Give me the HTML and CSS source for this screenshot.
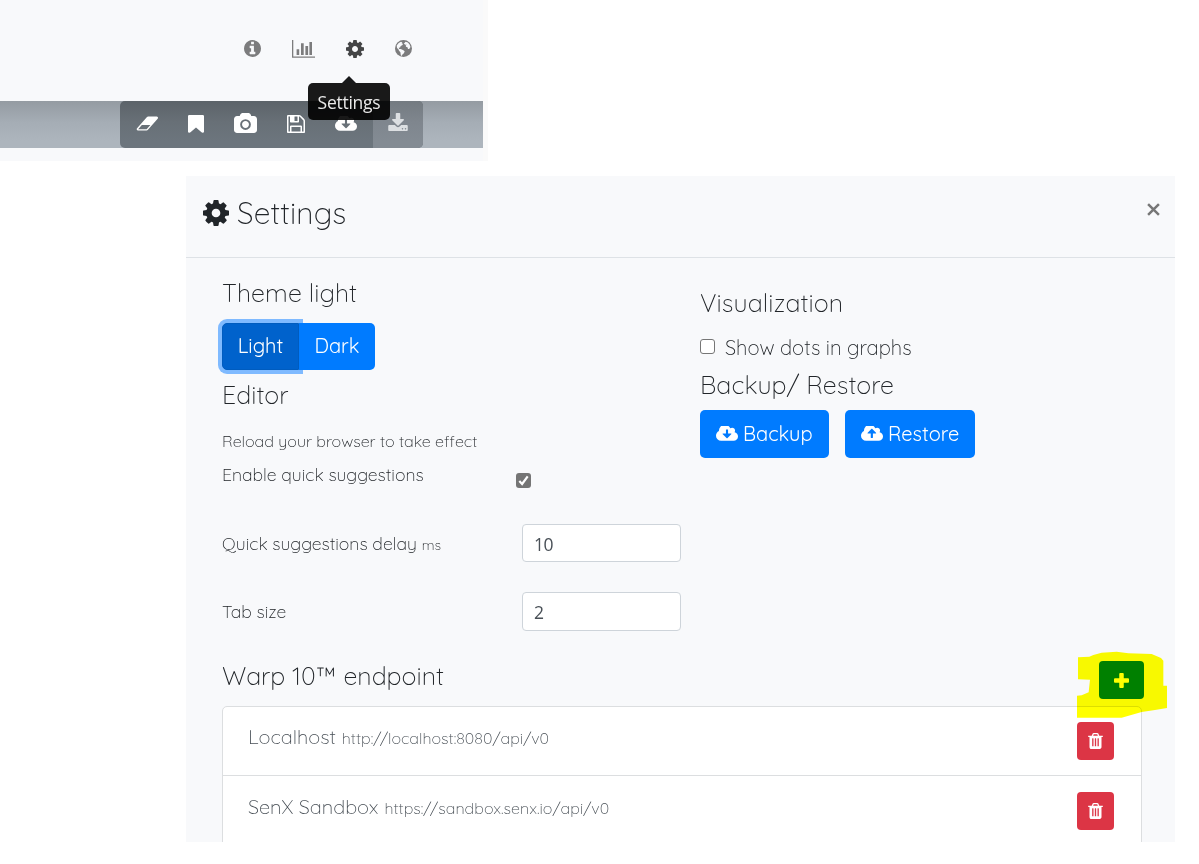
FILE: index.html
```html
<!DOCTYPE html>
<html lang="en">
<head>
<meta charset="utf-8">
<title>Settings</title>
<link rel="stylesheet" href="styles.css">
</head>
<body>
<svg class="sprite" aria-hidden="true">
  <symbol id="i-cog" viewBox="128 128 1536 1536"><path d="M1152 896q0-106-75-181t-181-75-181 75-75 181 75 181 181 75 181-75 75-181zm512-109v222q0 12-8 23t-20 13l-185 28q-19 54-39 91 35 50 107 138 10 12 10 25t-9 23q-27 37-99 108t-94 71q-12 0-26-9l-138-108q-44 23-91 38-16 136-29 186-7 28-36 28h-222q-14 0-24.500-8.500t-11.500-21.500l-28-184q-49-16-90-37l-141 107q-10 9-25 9-14 0-25-11-126-114-165-168-7-10-7-23 0-12 8-23 15-21 51-66.500t54-70.500q-27-50-41-99l-183-27q-13-2-21-12.500t-8-23.500v-222q0-12 8-23t19-13l186-28q14-46 39-92-40-57-107-138-10-12-10-24 0-10 9-23 26-36 98.500-107.500t94.500-71.500q13 0 26 10l138 107q44-23 91-38 16-136 29-186 7-28 36-28h222q14 0 24.500 8.500t11.500 21.500l28 184q49 16 90 37l142-107q9-9 24-9 13 0 25 10 129 119 165 170 7 8 7 22 0 12-8 23-15 21-51 66.500t-54 70.500q26 50 41 98l183 28q13 2 21 12.500t8 23.500z"/></symbol>
  <symbol id="i-trash" viewBox="192 128 1408 1536"><path d="M704 1376v-704q0-14-9-23t-23-9h-64q-14 0-23 9t-9 23v704q0 14 9 23t23 9h64q14 0 23-9t9-23zm256 0v-704q0-14-9-23t-23-9h-64q-14 0-23 9t-9 23v704q0 14 9 23t23 9h64q14 0 23-9t9-23zm256 0v-704q0-14-9-23t-23-9h-64q-14 0-23 9t-9 23v704q0 14 9 23t23 9h64q14 0 23-9t9-23zm-544-992h448l-48-117q-7-9-17-11h-317q-10 2-17 11zm928 32v64q0 14-9 23t-23 9h-96v948q0 83-47 143.500t-113 60.500h-832q-66 0-113-58.500t-47-141.500v-952h-96q-14 0-23-9t-9-23v-64q0-14 9-23t23-9h309l70-167q15-37 54-63t79-26h320q40 0 79 26t54 63l70 167h309q14 0 23 9t9 23z"/></symbol>
  <symbol id="i-cloud-down" viewBox="0 256 1920 1280"><path d="M1340 928q0-14-9-23t-23-9h-256v-320q0-13-9.500-22.500t-22.500-9.500h-120q-13 0-22.500 9.500t-9.500 22.500v320h-256q-13 0-22.500 9.500t-9.500 22.500q0 14 9 23l352 352q9 9 23 9t23-9l342-351q10-12 10-24zm580 224q0 159-112.500 271.500t-271.500 112.500h-1088q-185 0-316.500-131.500t-131.500-316.500q0-130 70-240t188-165q-2-30-2-43 0-212 150-362t362-150q156 0 285.500 87t188.500 231q71-62 166-62 106 0 181 75t75 181q0 76-41 138 130 31 213.500 135.500t83.500 238.500z"/></symbol>
  <symbol id="i-cloud-up" viewBox="0 256 1920 1280"><path d="M1320 864q0-14-9-23l-342-352q-9-9-23-9t-23 9l-341 351q-10 12-10 24 0 14 9 23t23 9h248v352q0 13 9.500 22.500t22.500 9.500h124q13 0 22.500-9.500t9.500-22.500v-352h248q13 0 22.500-9.500t9.500-22.500zm600 288q0 159-112.500 271.500t-271.500 112.500h-1088q-185 0-316.500-131.500t-131.500-316.500q0-130 70-240t188-165q-2-30-2-43 0-212 150-362t362-150q156 0 285.500 87t188.500 231q71-62 166-62 106 0 181 75t75 181q0 76-41 138 130 31 213.500 135.500t83.500 238.500z"/></symbol>
</svg>

<section class="topbar">
  <nav class="nav">
    <svg class="ic-info" viewBox="128 128 1536 1536"><path d="M1152 1376v-160q0-14-9-23t-23-9h-96v-512q0-14-9-23t-23-9h-320q-14 0-23 9t-9 23v160q0 14 9 23t23 9h96v320h-96q-14 0-23 9t-9 23v160q0 14 9 23t23 9h448q14 0 23-9t9-23zm-128-896v-160q0-14-9-23t-23-9h-192q-14 0-23 9t-9 23v160q0 14 9 23t23 9h192q14 0 23-9t9-23zm640 416q0 209-103 385.500t-279.500 279.500-385.500 103-385.500-103-279.500-279.500-103-385.500 103-385.500 279.500-279.500 385.500-103 385.500 103 279.500 279.500 103 385.500z"/></svg>
    <svg class="ic-chart" viewBox="0 0 23 18"><path d="M0 0h1.300v16.400H23v1.300H0zM4.600 9.200h2.600V15H4.600zM9 3.200h2.700V15H9zM13.400 6h2.700v9h-2.700zM17.400 2H20v13h-2.600z"/></svg>
    <svg class="ic-cog"><use href="#i-cog"/></svg>
    <svg class="ic-globe" viewBox="0 0 17 17"><circle cx="8.500" cy="8.500" r="8.500"/><path class="land" d="M1.700 5.500 3.700 3 6 1.800l1.300.6-.6 1.200 1.500.2-1 1.500-1.500.8-.6 1.400-1.400.2.500 1.300 1.500-.1 2.300 1 1.700 1.300-.8 2-1.500 1.200-.7 1.500-.9-.6-.4-3-1.400-1.600-.6-1.500-1.400-1.200zM8.800 3.700l1.800-2 2.300.9 1.700 1.900.9 2.600-1.300 2-1.200-.2-.5-1.700-1.500-.4-.3-1.200 1.200-.9-1.500.1z"/></svg>
  </nav>
  <div class="strip">
    <div class="tools">
      <svg class="ic-eraser" viewBox="0 256 1984 1280"><path d="M960 1408l336-384h-768l-336 384h768zm1013-1077q15 34 9.500 71.500t-30.500 65.500l-896 1024q-38 44-96 44h-768q-38 0-69.500-20.500t-47.500-54.500q-15-34-9.500-71.500t30.500-65.500l896-1024q38-44 96-44h768q38 0 69.500 20.500t47.500 54.500z"/></svg>
      <svg class="ic-bookmark" viewBox="256 128 1280 1536" preserveAspectRatio="none"><path d="M1420 128q23 0 44 9 33 13 52.500 41t19.500 62v1289q0 34-19.500 62t-52.500 41q-19 8-44 8-48 0-83-32l-441-424-441 424q-36 33-83 33-23 0-44-9-33-13-52.500-41t-19.500-62v-1289q0-34 19.500-62t52.500-41q21-9 44-9h1048z"/></svg>
      <svg class="ic-camera" viewBox="0 0 1920 1664"><path d="M960 672q119 0 203.500 84.500t84.500 203.500-84.500 203.500-203.500 84.500-203.500-84.500-84.500-203.500 84.500-203.500 203.500-84.500zm704-416q106 0 181 75t75 181v896q0 106-75 181t-181 75h-1408q-106 0-181-75t-75-181v-896q0-106 75-181t181-75h224l51-136q19-49 69.500-84.500t103.500-35.500h512q53 0 103.500 35.500t69.500 84.500l51 136h224zm-704 1152q185 0 316.500-131.500t131.500-316.500-131.500-316.500-316.500-131.500-316.500 131.500-131.500 316.500 131.500 316.500 316.500 131.500z"/></svg>
      <svg class="ic-floppy" viewBox="128 128 1536 1536"><path d="M512 1536h768v-384h-768v384zm896 0h128v-896q0-14-10-38.500t-20-34.500l-281-281q-10-10-34-20t-39-10v416q0 40-28 68t-68 28h-576q-40 0-68-28t-28-68v-416h-128v1280h128v-416q0-40 28-68t68-28h832q40 0 68 28t28 68v416zm-384-928v-320q0-13-9.500-22.500t-22.500-9.500h-192q-13 0-22.500 9.500t-9.500 22.500v320q0 13 9.500 22.500t22.500 9.500h192q13 0 22.500-9.500t9.500-22.500zm640 32v928q0 40-28 68t-68 28h-1344q-40 0-68-28t-28-68v-1344q0-40 28-68t68-28h928q40 0 88 20t76 48l280 280q28 28 48 76t20 88z"/></svg>
      <svg class="ic-cloud"><use href="#i-cloud-down"/></svg>
      <span class="tool-off"><svg class="ic-download" viewBox="64 0 1664 1536"><path d="M1344 1344q0-26-19-45t-45-19-45 19-19 45 19 45 45 19 45-19 19-45zm256 0q0-26-19-45t-45-19-45 19-19 45 19 45 45 19 45-19 19-45zm128-224v320q0 40-28 68t-68 28h-1472q-40 0-68-28t-28-68v-320q0-40 28-68t68-28h465l135 136q58 56 136 56t136-56l136-136h464q40 0 68 28t28 68zm-325-569q17 41-14 70l-448 448q-18 19-45 19t-45-19l-448-448q-31-29-14-70 17-39 59-39h256v-448q0-26 19-45t45-19h256q26 0 45 19t19 45v448h256q42 0 59 39z"/></svg></span>
    </div>
  </div>
  <div class="tooltip">Settings</div>
</section>

<main class="panel">
  <header class="head">
    <svg class="head-cog"><use href="#i-cog"/></svg>
    <h3>Settings</h3>
    <svg class="close" viewBox="0 0 12 12"><path d="M1 1l10 10M11 1L1 11"/></svg>
  </header>
  <div class="cols">
    <section class="left">
      <h4>Theme light</h4>
      <div class="group"><button class="on">Light</button><button class="dark">Dark</button></div>
      <h4 class="t-editor">Editor</h4>
      <p class="hint">Reload your browser to take effect</p>
      <div class="row r1"><label>Enable quick suggestions</label><span class="check on"><svg viewBox="0 0 15 15"><path d="M3.300 8.100l2.800 2.900 5.600-7.600"/></svg></span></div>
      <div class="row r2"><label>Quick suggestions delay <small>ms</small></label><input value="10"></div>
      <div class="row r3"><label>Tab size</label><input value="2"></div>
    </section>
    <section class="right">
      <h4>Visualization</h4>
      <div class="dots"><span class="check"></span><label>Show dots in graphs</label></div>
      <h4 class="t-back">Backup/ Restore</h4>
      <div class="btns">
        <button class="b1"><svg><use href="#i-cloud-down"/></svg>Backup</button>
        <button class="b2"><svg><use href="#i-cloud-up"/></svg>Restore</button>
      </div>
    </section>
  </div>
  <section class="endpoints">
    <div class="ep-head">
      <h4>Warp 10™ endpoint</h4>
      <button class="add"><svg viewBox="0 0 16 16"><path d="M5.600 1q0-1 1-1h2.800q1 0 1 1v4.600H15q1 0 1 1v2.800q0 1-1 1h-4.600V15q0 1-1 1H6.600q-1 0-1-1v-4.600H1q-1 0-1-1V6.600q0-1 1-1h4.600z"/></svg></button>
    </div>
    <div class="list">
      <div class="item"><div><span class="name">Localhost</span><span class="url">http://localhost:8080/api/v0</span></div><button class="del"><svg><use href="#i-trash"/></svg></button></div>
      <div class="item"><div><span class="name">SenX Sandbox</span><span class="url">https://sandbox.senx.io/api/v0</span></div><button class="del"><svg><use href="#i-trash"/></svg></button></div>
    </div>
    <svg class="marker" viewBox="51 33 270 201"><path d="M54 52l34-2 12-5 25-7 45-3 35 5 70 2 28 12 7 8v75h11v67l-36 6-40 6-60 17H51v-66l14-1 21-9 4-38-36-1z"/></svg>
  </section>
</main>
</body>
</html>
```
FILE: styles.css
```css
* { box-sizing: border-box; }
body {
  margin: 0;
  width: 1199px;
  height: 864px;
  overflow: hidden;
  background: #fff;
  color: #212529;
  font-family: Quicksand, Lato, sans-serif;
  font-weight: 300;
}
svg { display: block; flex: none; fill: currentColor; }
.sprite { position: absolute; width: 0; height: 0; }
h3, h4, p { margin: 0; font-weight: 300; }
h4 { font-size: 25px; line-height: 30px; letter-spacing: .08px; white-space: nowrap; }
button {
  border: 0;
  padding: 0;
  color: #fff;
  background: #007bff;
  font: 400 20px/30px Quicksand, Lato, sans-serif;
  border-radius: 5px;
}

/* top fragment */
.topbar {
  position: relative;
  width: 488px;
  height: 161px;
  background: #f8f9fb;
  border-right: 5px solid #fafafa;
}
.nav {
  display: flex;
  align-items: center;
  height: 101px;
  padding: 0 0 4px 244px;
  color: #7c7c7d;
}
.ic-info, .ic-cog, .ic-globe { width: 17px; height: 17px; }
.ic-chart { width: 23px; height: 18px; margin: 0 31px; }
.ic-cog { width: 18px; height: 18px; color: #444546; }
.ic-globe { margin-left: 31px; }
.land { fill: #f8f9fb; }
.strip {
  height: 47px;
  padding-left: 120px;
  background: linear-gradient(#949ba2, #a5adb5 45%, #adb5bd 85%);
}
.tools {
  display: flex;
  align-items: center;
  width: 303px;
  height: 47px;
  padding-left: 16px;
  border-radius: 5px;
  overflow: hidden;
  color: #fff;
  background: linear-gradient(#5c6369, #687077 45%, #6c757d 85%);
}
.ic-eraser { width: 22px; height: 15px; margin-bottom: 2px; }
.ic-bookmark { width: 16px; height: 18px; margin: 0 0 2px 30px; }
.ic-camera { width: 23px; height: 20px; margin: 0 30px 4px 30px; }
.ic-floppy { width: 18px; height: 18px; margin-bottom: 2px; }
.ic-cloud { width: 22px; height: 15px; margin: 0 1px 2px 30px; }
.tool-off {
  display: flex;
  align-items: center;
  justify-content: center;
  width: 50px;
  height: 47px;
  margin-left: 15px;
  padding-bottom: 5px;
  color: #dcdfe2;
  background: linear-gradient(#747b81, #7f868e 45%, #838b93 85%);
}
.ic-download { width: 20px; height: 18px; }
.tooltip {
  position: absolute;
  left: 308px;
  top: 83px;
  width: 82px;
  height: 37px;
  border-radius: 5px;
  background: rgba(0, 0, 0, .9);
  color: #e9e9e9;
  font: 400 17.500px/39px "Segoe UI", "Open Sans", sans-serif;
  letter-spacing: -.25px;
  text-align: center;
}
.tooltip::before {
  content: "";
  position: absolute;
  left: 34px;
  top: -7px;
  border: solid transparent;
  border-width: 0 7px 7px;
  border-bottom-color: #18191a;
}

/* settings panel */
.panel {
  width: 989px;
  height: 666px;
  margin: 15px 0 0 186px;
  overflow: hidden;
  background: #f8f9fb;
}
.head {
  display: flex;
  align-items: center;
  height: 82px;
  padding: 0 15px 8px 17px;
  border-bottom: 1px solid #dee2e6;
}
.head h3 { margin-left: 8px; font-size: 30px; line-height: 34px; letter-spacing: .2px; }
.head-cog { width: 26px; height: 26px; }
.close { width: 13px; height: 13px; margin: -7px 0 0 auto; fill: none; stroke: #777; stroke-width: 2.3; }
.cols { display: flex; padding-left: 36px; }
.left { width: 478px; padding-top: 20px; }
.right { padding-top: 30px; }
.group { display: flex; margin-top: 15px; }
.group button { height: 47px; padding-bottom: 1px; }
.group .on {
  width: 77px;
  border: 1px solid #005cbf;
  border-radius: 5px 0 0 5px;
  background: #0062cc;
  box-shadow: 0 0 0 4px #7fbaff;
}
.group .dark { position: relative; width: 76px; border-radius: 0 5px 5px 0; }
.t-editor { margin-top: 10px; }
.hint { margin-top: 19px; font-size: 16.150px; line-height: 24px; }
.row { display: flex; align-items: center; font-size: 17.600px; }
.row label { width: 300px; white-space: nowrap; }
.row small { font-size: 14.080px; }
.r1 { height: 28px; margin-top: 7px; }
.r1 label { width: 294px; }
.r1 .check { margin-top: 13px; }
.r2 { height: 38px; margin-top: 36px; }
.r3 { height: 39px; margin-top: 30px; }
.r3 label { padding-bottom: 2px; }
input {
  width: 159px;
  height: 100%;
  padding: 1px 11px 0;
  border: 1px solid #ced4da;
  border-radius: 4px;
  background: #fff;
  color: #495057;
  font: 400 17.500px "Segoe UI", "Open Sans", sans-serif;
  letter-spacing: -.5px;
}
.check {
  display: block;
  flex: none;
  width: 15px;
  height: 15px;
  border: 1px solid #767676;
  border-radius: 3px;
  background: #fff;
}
.check.on { border: 0; background: #757575; }
.check svg { width: 15px; height: 15px; fill: none; stroke: #fff; stroke-width: 2.2; }
.dots {
  display: flex;
  align-items: center;
  height: 30px;
  margin-top: 13px;
  font-size: 20.200px;
}
.dots label { margin-left: 10px; padding-top: 2px; }
.t-back { margin-top: 9px; }
.btns { display: flex; gap: 16px; margin-top: 10px; }
.btns button { display: flex; align-items: center; height: 48px; padding-left: 16px; }
.btns svg { width: 22px; height: 15px; margin: 0 5px 1px 0; }
.b1 { width: 129px; }
.b2 { width: 130px; }

.endpoints { position: relative; margin: 30px 33px 0 36px; }
.ep-head { display: flex; height: 38px; justify-content: space-between; }
.ep-head h4 { letter-spacing: 0; }
.add {
  display: flex;
  align-items: center;
  justify-content: center;
  width: 45px;
  height: 38px;
  margin-right: -2px;
  border-radius: 4px;
  background: #008000;
}
.add svg { width: 15px; height: 15px; }
.list {
  height: 180px;
  margin-top: 7px;
  border: 1px solid #dcdee0;
  border-radius: 5px;
  background: #fff;
  color: #495057;
}
.item { display: flex; justify-content: space-between; height: 68px; padding: 15px 27px 0 25px; }
.item + .item { height: 71px; padding-top: 16px; border-top: 1px solid #dcdee0; }
.item > div { line-height: 29px; white-space: nowrap; }
.name { font-size: 20px; }
.url { margin-left: 6px; font-size: 16.100px; }
.del {
  display: flex;
  align-items: center;
  justify-content: center;
  width: 37px;
  height: 38px;
  border-radius: 4px;
  background: #dc3545;
}
.del svg { width: 15px; height: 16px; }
.marker {
  position: absolute;
  left: 855px;
  top: -10px;
  width: 90px;
  height: 67px;
  fill: #ff0;
  mix-blend-mode: multiply;
}
```
